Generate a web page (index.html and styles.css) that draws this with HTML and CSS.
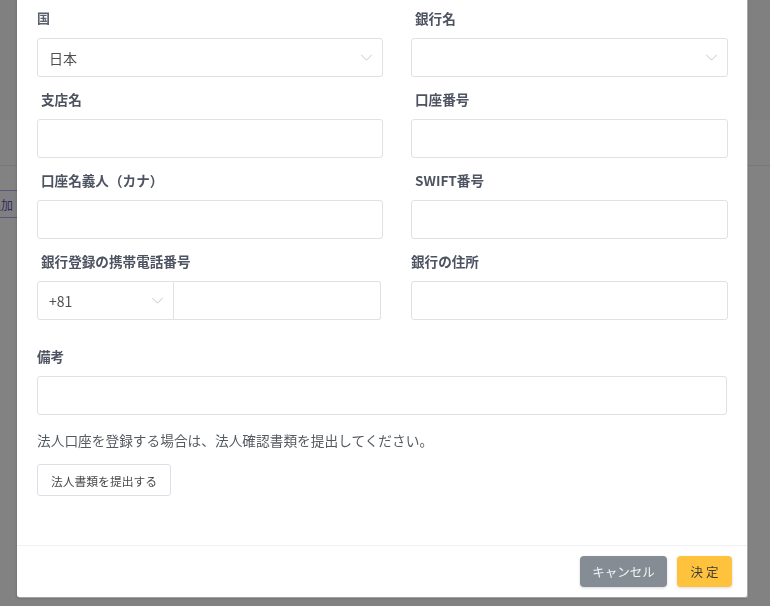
FILE: index.html
```html
<!DOCTYPE html>
<html lang="ja">
<head>
<meta charset="utf-8">
<title>銀行口座</title>
<link rel="stylesheet" href="styles.css">
</head>
<body>
<div class="page">
  <div class="page-header"></div>
  <div class="page-toolbar"></div>
  <div class="page-content">
    <button class="add-btn">追加</button>
  </div>
</div>
<div class="overlay"></div>
<div class="modal">
  <div class="modal-body">
    <div class="form-grid">
      <div class="field">
        <label class="label label-plain">国</label>
        <div class="select"><span class="value">日本</span><svg class="chev" viewBox="0 0 14 8"><path d="M1 1l6 6 6-6" fill="none" stroke="#c0c4cc" stroke-width="1.1"/></svg></div>
      </div>
      <div class="field">
        <label class="label indent">銀行名</label>
        <div class="select"><span class="value"></span><svg class="chev" viewBox="0 0 14 8"><path d="M1 1l6 6 6-6" fill="none" stroke="#c0c4cc" stroke-width="1.1"/></svg></div>
      </div>
      <div class="field">
        <label class="label indent">支店名</label>
        <div class="input"></div>
      </div>
      <div class="field">
        <label class="label indent">口座番号</label>
        <div class="input"></div>
      </div>
      <div class="field">
        <label class="label indent">口座名義人（カナ）</label>
        <div class="input"></div>
      </div>
      <div class="field">
        <label class="label indent">SWIFT番号</label>
        <div class="input"></div>
      </div>
      <div class="field">
        <label class="label indent">銀行登録の携帯電話番号</label>
        <div class="phone">
          <div class="select phone-code"><span class="value">+81</span><svg class="chev" viewBox="0 0 14 8"><path d="M1 1l6 6 6-6" fill="none" stroke="#c0c4cc" stroke-width="1.1"/></svg></div>
          <div class="input phone-num"></div>
        </div>
      </div>
      <div class="field">
        <label class="label">銀行の住所</label>
        <div class="input"></div>
      </div>
    </div>
    <div class="field field-full">
      <label class="label">備考</label>
      <div class="input"></div>
    </div>
    <p class="note">法人口座を登録する場合は、法人確認書類を提出してください。</p>
    <button class="doc-btn">法人書類を提出する</button>
  </div>
  <div class="modal-footer">
    <button class="btn btn-cancel">キャンセル</button>
    <button class="btn btn-ok">決 定</button>
  </div>
</div>
</body>
</html>
```
FILE: styles.css
```css
* { box-sizing: border-box; }
html, body { margin: 0; padding: 0; }
body {
  width: 770px;
  height: 606px;
  overflow: hidden;
  font-family: "Noto Sans CJK JP", "Noto Sans", sans-serif;
  background: #ffffff;
}
.page { display: flex; flex-direction: column; }
.page-header { height: 120px; background: #fbfbfd; }
.page-toolbar { height: 46px; background: #ffffff; border-bottom: 1px solid #ececf0; }
.page-content { padding-top: 24px; background: #ffffff; height: 440px; }
.add-btn {
  margin-left: -22px;
  height: 28px;
  padding: 0 10px;
  font-family: inherit;
  font-size: 12px;
  color: #6a57b8;
  background: #fcfbff;
  border: 1px solid #b9a9ee;
  border-radius: 3px;
}
.overlay {
  position: fixed;
  inset: 0;
  background: rgba(0, 0, 0, 0.49);
}
.modal {
  position: fixed;
  left: 17px;
  bottom: 9px;
  width: 730px;
  background: #ffffff;
  border-radius: 2px;
  box-shadow: 1px 1px 0 rgba(255,255,255,0.35), 0 1px 3px rgba(0,0,0,0.2);
}
.modal-body {
  padding: 40px 20px 49px 20px;
}
.form-grid {
  display: grid;
  grid-template-columns: 346px 317px;
  column-gap: 28px;
  row-gap: 4px;
}
.field { display: flex; flex-direction: column; }
.label {
  height: 38px;
  line-height: 36px;
  font-size: 13.6px;
  font-weight: 700;
  color: #4d5361;
}
.label-plain { color: #59606d; font-size: 13px; }
.indent { padding-left: 4px; }
.input, .select {
  height: 39px;
  border: 1px solid #dfe1e6;
  border-radius: 3px;
  background: #fff;
}
.select {
  display: flex;
  align-items: center;
  justify-content: space-between;
  padding: 0 9px 0 11px;
}
.value { font-size: 14px; color: #505050; }
.chev { width: 13px; height: 7px; }
.phone { display: flex; }
.phone-code { width: 137px; border-radius: 3px 0 0 3px; }
.phone-num { width: 207px; border-left: none; border-radius: 0 3px 3px 0; }
.field-full { margin-top: 18px; }
.note {
  margin: 15px 0 0 0;
  height: 20px;
  line-height: 20px;
  font-size: 13.7px;
  color: #555a60;
}
.doc-btn {
  margin-top: 14px;
  height: 32px;
  width: 134px;
  padding: 0;
  font-family: inherit;
  font-size: 11.8px;
  color: #4a4a4a;
  background: #fff;
  border: 1px solid #dcdfe6;
  border-radius: 3px;
}
.modal-footer {
  display: flex;
  justify-content: flex-end;
  gap: 10px;
  padding: 10px 15px 10px 20px;
  border-top: 1px solid #f0f0f2;
}
.btn {
  height: 31px;
  border: none;
  border-radius: 4px;
  font-family: inherit;
  font-size: 12.5px;
  box-shadow: 0 1px 3px rgba(0,0,0,0.15);
}
.btn-cancel { width: 87px; background: #858c94; color: #f4f5f6; }
.btn-ok { width: 55px; background: #ffc23d; color: #3a3a3a; }
```
